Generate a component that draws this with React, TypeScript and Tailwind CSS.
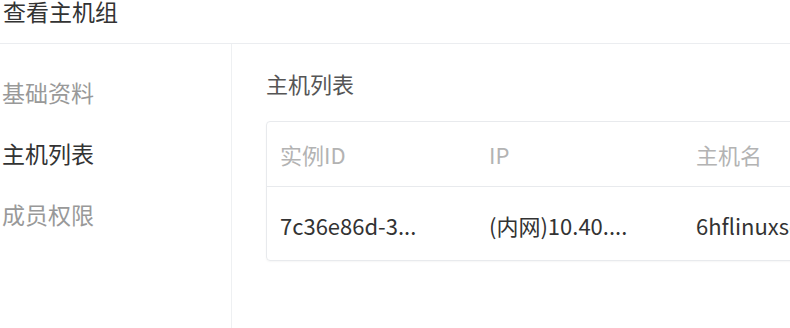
export default function App() {
  const menu = [
    { label: '基础资料', active: false },
    { label: '主机列表', active: true },
    { label: '成员权限', active: false },
  ];

  return (
    <div
      className="w-[790px] h-[328px] overflow-hidden bg-white text-[#333]"
      style={{ fontFamily: '"Noto Sans CJK SC", "Noto Sans", sans-serif' }}
    >
      <div className="h-[44px] border-b border-[#ebedf0] pl-[3px]">
        <h1 className="text-[23px] leading-[23px] font-normal text-[#333]">查看主机组</h1>
      </div>
      <div className="flex h-[284px]">
        <nav className="w-[232px] shrink-0 border-r border-[#eef0f2] pt-[36px] flex flex-col gap-[37px] pl-[2px]">
          {menu.map((m) => (
            <div
              key={m.label}
              className={`text-[23px] leading-[24px] ${m.active ? 'text-[#333]' : 'text-[#999]'}`}
            >
              {m.label}
            </div>
          ))}
        </nav>
        <main className="flex-1 pl-[34px] pt-[27px]">
          <h2 className="text-[22px] leading-[24px] text-[#555] font-normal">主机列表</h2>
          <div className="mt-[26px] w-[640px] rounded-[4px] border border-[#e8eaed] shadow-[0_1px_2px_rgba(0,0,0,0.04)]">
            <div className="grid grid-cols-[209px_207px_1fr] h-[65px] items-center px-[13px] border-b border-[#e8eaed] text-[22px] text-[#b3b3b3]">
              <div>实例ID</div>
              <div>IP</div>
              <div>主机名</div>
            </div>
            <div className="grid grid-cols-[209px_207px_1fr] h-[73px] pt-[4px] items-center px-[13px] text-[22px] text-[#333]">
              <div>7c36e86d-3...</div>
              <div>(内网)10.40....</div>
              <div>6hflinuxserver01</div>
            </div>
          </div>
        </main>
      </div>
    </div>
  );
}
